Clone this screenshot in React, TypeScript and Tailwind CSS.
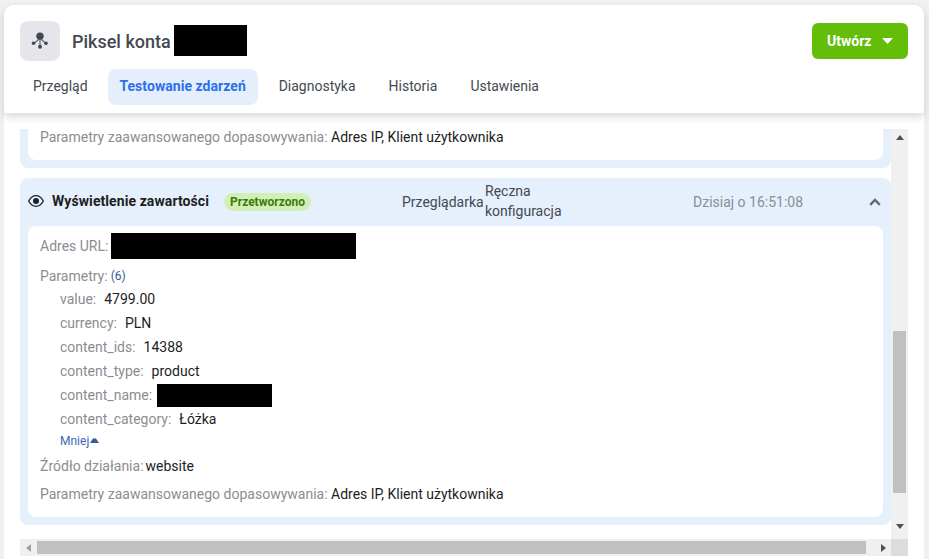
import { ReactNode } from "react";

function Redacted({ className }: { className: string }) {
  return <span className={`inline-block bg-black ${className}`} />;
}

function Label({ children }: { children: ReactNode }) {
  return <span className="text-[#8a8d91]">{children}</span>;
}

function AdvancedParams() {
  return (
    <p className="h-[24px] leading-[24px]">
      <Label>Parametry zaawansowanego dopasowywania:</Label> Adres IP, Klient użytkownika
    </p>
  );
}

function ParamRow({ name, children }: { name: string; children: ReactNode }) {
  return (
    <div className="flex h-[24px] items-center gap-[8px] pl-[20px]">
      <Label>{name}:</Label>
      {children}
    </div>
  );
}

export default function App() {
  return (
    <div className="h-[559px] w-[929px] overflow-hidden bg-[#f0f0f0] pt-[5px] pr-[5px] pl-[4px] font-['Roboto',sans-serif] text-[14px] text-[#1c1e21]">
      <div className="h-[554px] rounded-t-[10px] bg-white">
        <header className="relative z-10 h-[108px] rounded-t-[10px] rounded-b-[3px] bg-white px-[16px] pt-[16px] shadow-[0_4px_9px_rgba(0,0,0,0.15)]">
          <div className="flex items-center justify-between">
            <div className="flex items-center">
              <div className="flex h-[40px] w-[40px] items-center justify-center rounded-lg bg-[#e4e6eb]">
                <svg width="20" height="20" viewBox="0 0 20 20" fill="#444950">
                  <circle cx="10" cy="5.3" r="3.7" />
                  <circle cx="3.5" cy="12.3" r="1.8" />
                  <circle cx="16" cy="12.3" r="1.8" />
                  <circle cx="10" cy="15.7" r="2" />
                  <path d="M9.5 8h1v6h-1zM3.6 11.9l4.6-3.6.6.8-4.6 3.6zM16.4 11.9l-4.6-3.6-.6.8 4.6 3.6z" />
                </svg>
              </div>
              <h1 className="ml-[12px] text-[18px] font-medium text-[#444950]">Piksel konta</h1>
              <Redacted className="mb-[1px] ml-[3px] h-[31px] w-[73px]" />
            </div>
            <button className="flex h-[36px] w-[96px] items-center gap-[11px] rounded-md bg-[#63be09] pl-[15px] text-[14px] font-bold text-white">
              Utwórz
              <svg width="11" height="6" viewBox="0 0 11 6" fill="white">
                <path d="M0 0h11L5.5 6z" />
              </svg>
            </button>
          </div>
          <nav className="mt-[8px] flex gap-[9px] pl-[1px] text-[#444950]">
            <span className="flex h-[36px] items-center pr-[11px] pl-[12px] pb-[1px]">Przegląd</span>
            <span className="flex h-[36px] w-[150px] items-center justify-center rounded-lg bg-[#e5effc] pb-[1px] font-bold tracking-[0.05px] text-[#2d6fe8]">
              Testowanie zdarzeń
            </span>
            <span className="flex h-[36px] items-center px-[12px] pb-[1px]">Diagnostyka</span>
            <span className="flex h-[36px] items-center px-[12px] pb-[1px]">Historia</span>
            <span className="flex h-[36px] items-center px-[12px] pb-[1px]">Ustawienia</span>
          </nav>
        </header>

        <div className="ml-[16px] mt-[16px] w-[888px]">
          <div className="flex h-[410px]">
            <div className="w-[871px] overflow-hidden">
              <section className="h-[39px] rounded-b-lg bg-[#e6effc] px-[8px] pb-[8px]">
                <div className="h-[31px] overflow-hidden rounded-b-lg bg-white px-[12px]">
                  <div className="-mt-[4px]">
                    <AdvancedParams />
                  </div>
                </div>
              </section>

              <section className="mt-[10px] h-[347px] rounded-lg bg-[#e6effc] px-[8px] pb-[8px]">
                <div className="flex h-[48px] items-center">
                  <svg className="mb-[3px]" width="16" height="16" viewBox="0 0 24 24" fill="none" stroke="#1c1e21" strokeWidth="2">
                    <path d="M1 12C4 6.5 8 4 12 4S20 6.5 23 12C20 17.5 16 20 12 20S4 17.5 1 12z" />
                    <circle cx="12" cy="12" r="3.5" fill="#1c1e21" />
                  </svg>
                  <div className="mb-[1px] flex w-[358px] items-center pl-[8px]">
                    <span className="font-bold tracking-[0.08px]">Wyświetlenie zawartości</span>
                    <span className="ml-[15px] flex h-[18px] w-[87px] items-center justify-center rounded-full bg-[#d3efb9] text-[12px] font-bold text-[#3a7d08]">
                      Przetworzono
                    </span>
                  </div>
                  <span className="w-[83px] text-[#444950]">Przeglądarka</span>
                  <span className="mb-[2px] w-[208px] leading-[20px] text-[#444950]">
                    Ręczna
                    <br />
                    konfiguracja
                  </span>
                  <span className="w-[176px] text-[#8a8d91]">Dzisiaj o 16:51:08</span>
                  <svg width="12" height="8" viewBox="0 0 12 8" fill="none" stroke="#606770" strokeWidth="2.4">
                    <path d="M1.2 6.8L6 2l4.8 4.8" />
                  </svg>
                </div>
                <div className="h-[291px] rounded-lg bg-white px-[12px] pt-[7px]">
                  <div className="flex h-[26px] items-center gap-[3px]">
                    <span className="pt-[1px]">
                      <Label>Adres URL:</Label>
                    </span>
                    <Redacted className="h-[26px] w-[245px]" />
                  </div>
                  <p className="mt-[4px] flex h-[24px] items-center gap-[3px] pt-[2px]">
                    <Label>Parametry:</Label>
                    <span className="text-[12px] text-[#385898]">(6)</span>
                  </p>
                  <ParamRow name="value">4799.00</ParamRow>
                  <ParamRow name="currency">PLN</ParamRow>
                  <ParamRow name="content_ids">14388</ParamRow>
                  <ParamRow name="content_type">product</ParamRow>
                  <ParamRow name="content_name">
                    <Redacted className="-ml-[3px] h-[23px] w-[115px]" />
                  </ParamRow>
                  <ParamRow name="content_category">Łóżka</ParamRow>
                  <div className="flex h-[18px] items-center gap-[1px] pt-[1px] pl-[20px] text-[12px] text-[#4267b2]">
                    Mniej
                    <svg width="9" height="5" viewBox="0 0 9 5" fill="#385898">
                      <path d="M0 5L3 .5h3L9 5z" />
                    </svg>
                  </div>
                  <p className="mt-[5px] flex h-[24px] items-center gap-[2px]">
                    <Label>Źródło działania:</Label>
                    <span>website</span>
                  </p>
                  <div className="mt-[4px]">
                    <AdvancedParams />
                  </div>
                </div>
              </section>
            </div>

            <div className="flex w-[17px] flex-col items-center bg-[#f0f0f0]">
              <svg className="mt-[6px]" width="8" height="5" viewBox="0 0 8 5" fill="#505050">
                <path d="M0 5L4 0l4 5z" />
              </svg>
              <div className="mt-[191px] h-[162px] w-[13px] bg-[#c0c0c0]" />
              <svg className="mt-[31px]" width="8" height="5" viewBox="0 0 8 5" fill="#505050">
                <path d="M0 0h8L4 5z" />
              </svg>
            </div>
          </div>

          <div className="flex h-[17px]">
            <div className="flex w-[871px] items-center bg-[#f0f0f0]">
              <svg className="ml-[6px]" width="5" height="8" viewBox="0 0 5 8" fill="#a0a0a0">
                <path d="M5 0v8L0 4z" />
              </svg>
              <div className="ml-[6px] h-[13px] w-[829px] bg-[#c0c0c0]" />
              <svg className="ml-[15px]" width="5" height="8" viewBox="0 0 5 8" fill="#505050">
                <path d="M0 0v8l5-4z" />
              </svg>
            </div>
            <div className="w-[17px] bg-[#dcdcdc]" />
          </div>
        </div>
      </div>
    </div>
  );
}
